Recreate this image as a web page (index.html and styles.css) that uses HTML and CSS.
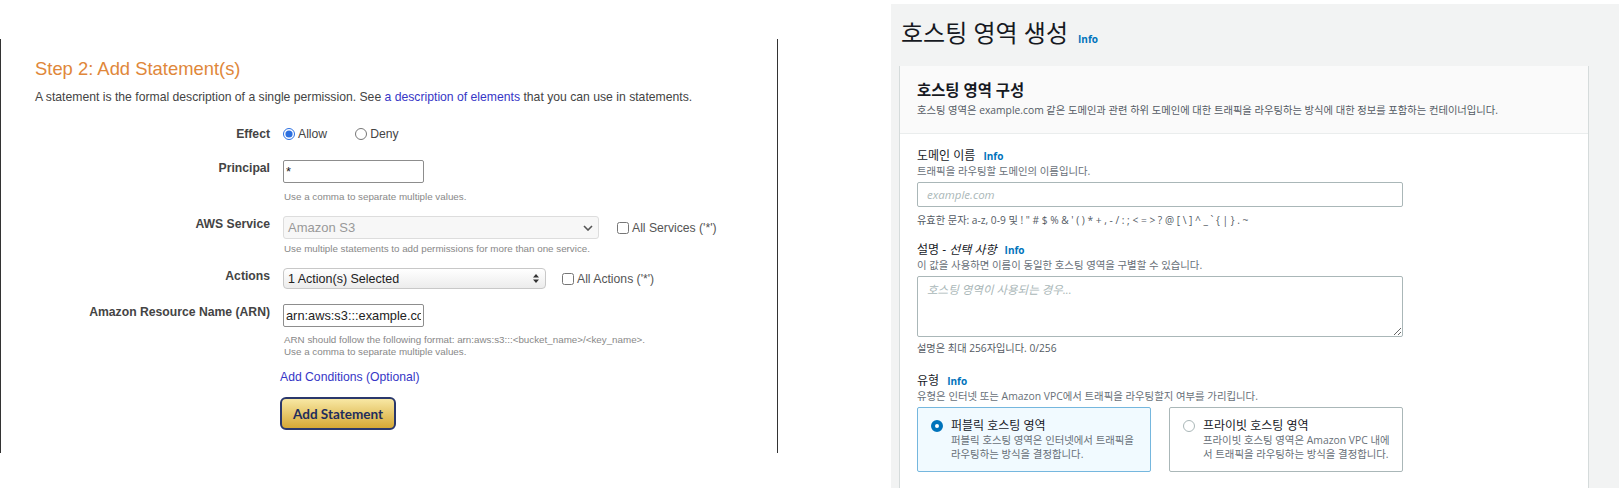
FILE: index.html
```html
<!DOCTYPE html>
<html lang="ko">
<head>
    <meta charset="UTF-8">
    <title>Add Statement / 호스팅 영역 생성</title>
    <link rel="stylesheet" href="styles.css">
</head>
<body>
<div class="page">
    <!-- Policy generator: step 2 -->
    <section class="policy">
        <h2 class="step-title">Step 2: Add Statement(s)</h2>
        <p class="step-desc">A statement is the formal description of a single permission. See <a href="#">a description of elements</a> that you can use in statements.</p>

        <div class="field field-effect">
            <div class="field-label">Effect</div>
            <div class="field-control">
                <div class="control-row">
                    <label class="choice"><input type="radio" name="effect" checked>Allow</label>
                    <label class="choice choice-deny"><input type="radio" name="effect">Deny</label>
                </div>
            </div>
        </div>

        <div class="field field-principal">
            <div class="field-label">Principal</div>
            <div class="field-control">
                <input class="text-input" type="text" value="*">
                <div class="hint hint-principal">Use a comma to separate multiple values.</div>
            </div>
        </div>

        <div class="field field-service">
            <div class="field-label">AWS Service</div>
            <div class="field-control">
                <div class="control-row">
                    <div class="select select-disabled">
                        <span>Amazon S3</span>
                        <svg width="10" height="6" viewBox="0 0 10 6"><path d="M1 1l4 4 4-4" fill="none" stroke="#555" stroke-width="1.6"/></svg>
                    </div>
                    <label class="check check-service"><input type="checkbox">All Services ('*')</label>
                </div>
                <div class="hint hint-service">Use multiple statements to add permissions for more than one service.</div>
            </div>
        </div>

        <div class="field field-actions">
            <div class="field-label">Actions</div>
            <div class="field-control">
                <div class="control-row">
                    <div class="select select-actions">
                        <span>1 Action(s) Selected</span>
                        <svg width="6" height="9" viewBox="0 0 6 9"><path d="M3 0l3 3.5H0z M3 9L0 5.5h6z" fill="#333"/></svg>
                    </div>
                    <label class="check check-actions"><input type="checkbox">All Actions ('*')</label>
                </div>
            </div>
        </div>

        <div class="field field-arn">
            <div class="field-label">Amazon Resource Name (ARN)</div>
            <div class="field-control">
                <input class="text-input" type="text" value="arn:aws:s3:::example.com/*">
                <div class="hint hint-arn">ARN should follow the following format: arn:aws:s3:::&lt;bucket_name&gt;/&lt;key_name&gt;.<br>Use a comma to separate multiple values.</div>
            </div>
        </div>

        <a class="conditions" href="#">Add Conditions (Optional)</a>
        <button class="add-btn" type="button">Add Statement</button>
    </section>

    <!-- Route 53: create hosted zone -->
    <section class="route53">
        <div class="page-title">
            <h1>호스팅 영역 생성</h1>
            <a class="info" href="#">Info</a>
        </div>

        <div class="card">
            <div class="card-header">
                <h2>호스팅 영역 구성</h2>
                <p>호스팅 영역은 example.com 같은 도메인과 관련 하위 도메인에 대한 트래픽을 라우팅하는 방식에 대한 정보를 포함하는 컨테이너입니다.</p>
            </div>
            <div class="card-body">
                <div class="form-field">
                    <div class="form-label">도메인 이름 <a class="info" href="#">Info</a></div>
                    <div class="form-desc">트래픽을 라우팅할 도메인의 이름입니다.</div>
                    <input class="r-input" type="text" placeholder="example.com">
                    <div class="form-note">유효한 문자: a-z, 0-9 및 ! " # $ % &amp; ' ( ) * + , - / : ; &lt; = &gt; ? @ [ \ ] ^ _ ` { | } . ~</div>
                </div>

                <div class="form-field field-desc">
                    <div class="form-label">설명 - <em>선택 사항</em> <a class="info" href="#">Info</a></div>
                    <div class="form-desc">이 값을 사용하면 이름이 동일한 호스팅 영역을 구별할 수 있습니다.</div>
                    <textarea class="r-textarea" placeholder="호스팅 영역이 사용되는 경우..."></textarea>
                    <div class="form-note">설명은 최대 256자입니다. 0/256</div>
                </div>

                <div class="form-field field-type">
                    <div class="form-label">유형 <a class="info" href="#">Info</a></div>
                    <div class="form-desc">유형은 인터넷 또는 Amazon VPC에서 트래픽을 라우팅할지 여부를 가리킵니다.</div>
                    <div class="tiles">
                        <div class="tile tile-selected">
                            <span class="radio-dot"></span>
                            <div>
                                <div class="tile-title">퍼블릭 호스팅 영역</div>
                                <div class="tile-desc">퍼블릭 호스팅 영역은 인터넷에서 트래픽을<br>라우팅하는 방식을 결정합니다.</div>
                            </div>
                        </div>
                        <div class="tile">
                            <span class="radio-dot"></span>
                            <div>
                                <div class="tile-title">프라이빗 호스팅 영역</div>
                                <div class="tile-desc">프라이빗 호스팅 영역은 Amazon VPC 내에<br>서 트래픽을 라우팅하는 방식을 결정합니다.</div>
                            </div>
                        </div>
                    </div>
                </div>
            </div>
        </div>
    </section>
</div>
</body>
</html>
```

FILE: styles.css
```css
* { box-sizing: border-box; }
body {
    margin: 0;
    background: #fff;
}
.page {
    display: flex;
    align-items: flex-start;
}

/* ---- policy generator ---- */
.policy {
    width: 778px;
    height: 414px;
    margin-top: 39px;
    padding: 19px 0 0 34px;
    border-left: 1px solid #333;
    border-right: 1px solid #333;
    font-family: "Liberation Sans", Arial, sans-serif;
    color: #444;
}
.policy a {
    color: #3636c6;
    text-decoration: none;
}
.step-title {
    margin: 0;
    font-size: 18.4px;
    line-height: 22px;
    font-weight: normal;
    color: #e0873a;
}
.step-desc {
    margin: 9px 0 0;
    font-size: 12.2px;
    line-height: 16px;
}
.field {
    display: flex;
    align-items: flex-start;
}
.field-label {
    width: 248px;
    padding-right: 13px;
    text-align: right;
    font-size: 12.2px;
    line-height: 16px;
    font-weight: bold;
    color: #444;
}
.field-control {
    display: flex;
    flex-direction: column;
}
.control-row {
    display: flex;
    align-items: center;
    height: 16px;
}
.field-effect { margin-top: 21px; }
.field-principal { margin-top: 18px; }
.field-service { margin-top: 13px; }
.field-actions { margin-top: 13px; }
.field-arn { margin-top: 15px; }
.field-service .control-row { height: 23px; }
.field-actions .control-row { height: 21px; }

.choice, .check {
    display: flex;
    align-items: center;
    font-size: 12.2px;
    color: #444;
}
.choice input {
    width: 12px;
    height: 12px;
    margin: 0 3px 0 0;
    accent-color: #2b6fe0;
}
.choice-deny { margin-left: 28px; }
.check input {
    width: 12px;
    height: 12px;
    margin: 0 3px 0 0;
}
.check-service { margin-left: 18px; color: #555; }
.check-actions { margin-left: 16px; color: #555; }

.text-input {
    width: 141px;
    height: 23px;
    padding: 0 2px;
    border: 1px solid #8d8d8d;
    border-radius: 2px;
    font-family: "Liberation Sans", Arial, sans-serif;
    font-size: 12.8px;
    color: #222;
}
.select {
    display: flex;
    align-items: center;
    justify-content: space-between;
    font-size: 12px;
}
.select-disabled {
    width: 316px;
    height: 23px;
    padding: 0 5px 0 4px;
    border: 1px solid #ddd;
    border-radius: 3px;
    background: #f7f7f7;
    color: #999;
    font-size: 13px;
}
.select-actions {
    width: 263px;
    height: 21px;
    padding: 0 6px 0 4px;
    border: 1px solid #c8c8c8;
    border-radius: 4px;
    background: linear-gradient(#fff, #ececec);
    color: #222;
    font-size: 12.5px;
}
.hint {
    font-size: 9.8px;
    line-height: 12px;
    color: #888;
    padding-left: 1px;
}
.hint-principal { margin-top: 8px; }
.hint-service { margin-top: 4px; }
.hint-arn { margin-top: 7px; }

.conditions {
    display: block;
    margin: 11px 0 0 245px;
    font-size: 12.2px;
    line-height: 16px;
}
.add-btn {
    display: block;
    width: 116px;
    height: 33px;
    margin: 12px 0 0 245px;
    border: 2px solid #2a386c;
    border-radius: 6px;
    background: linear-gradient(#f8e8a4, #d5a835);
    color: #1f2d5c;
    font-family: Lato, "Open Sans", sans-serif;
    font-size: 13.5px;
    font-weight: bold;
}

/* ---- route 53 ---- */
.route53 {
    width: 728px;
    height: 484px;
    margin: 4px 0 0 113px;
    padding: 14px 0 0 8px;
    overflow: hidden;
    background: #f2f3f3;
    font-family: "Open Sans", "Noto Sans CJK KR", sans-serif;
    color: #16191f;
}
.page-title {
    display: flex;
    align-items: baseline;
    gap: 10px;
    padding-left: 2px;
}
.page-title h1 {
    margin: 0;
    font-size: 24px;
    line-height: 30px;
    font-weight: normal;
}
.page-title .info { position: relative; top: 1px; }
.info {
    color: #0073bb;
    font-size: 10px;
    font-weight: bold;
    text-decoration: none;
}
.form-label .info { margin-left: 5px; }
.card {
    width: 690px;
    height: 500px;
    margin-top: 18px;
    background: #fff;
    border-left: 1px solid #d5dbdb;
    border-right: 1px solid #d5dbdb;
}
.card-header {
    padding: 15px 17px 16px;
    background: #fafafa;
    border-bottom: 1px solid #eaeded;
}
.card-header h2 {
    margin: 0;
    font-size: 15.4px;
    line-height: 20px;
    font-weight: bold;
}
.card-header p {
    margin: 2px 0 0;
    font-size: 10.3px;
    line-height: 14px;
    color: #545b64;
}
.card-body {
    padding: 14px 17px 0;
}
.form-label {
    font-size: 12px;
    line-height: 16px;
}
.form-label em { font-style: italic; }
.form-desc {
    font-size: 10.4px;
    line-height: 14px;
    color: #687078;
}
.form-note {
    margin-top: 6px;
    font-size: 10.2px;
    line-height: 14px;
    color: #545b64;
}
.field-desc { margin-top: 15px; }
.field-desc .form-note { margin-top: 4px; }
.field-type { margin-top: 18px; }

.r-input, .r-textarea {
    display: block;
    width: 486px;
    margin-top: 4px;
    padding: 0 9px;
    border: 1px solid #aab7b8;
    border-radius: 2px;
    font-family: "Open Sans", "Noto Sans CJK KR", sans-serif;
    font-size: 11.5px;
    color: #16191f;
}
.r-input { height: 25px; }
.r-textarea {
    height: 61px;
    padding-top: 4px;
    resize: vertical;
}
.r-input::placeholder, .r-textarea::placeholder {
    color: #aab7b8;
    font-style: italic;
}

.tiles {
    display: grid;
    grid-template-columns: 1fr 1fr;
    gap: 18px;
    width: 486px;
    margin-top: 4px;
}
.tile {
    display: flex;
    align-items: flex-start;
    gap: 8px;
    height: 65px;
    padding: 11px 2px 0 13px;
    border: 1px solid #aab7b8;
    border-radius: 2px;
}
.tile-selected {
    background: #f1faff;
    border-color: #75b7de;
}
.radio-dot {
    flex: none;
    width: 12px;
    height: 12px;
    margin-top: 1px;
    border: 1.5px solid #aab7b8;
    border-radius: 50%;
    background: #fff;
}
.tile-selected .radio-dot {
    border: 4px solid #0073bb;
}
.tile-title {
    font-size: 12px;
    line-height: 14px;
}
.tile-desc {
    font-size: 10.4px;
    line-height: 14px;
    color: #687078;
    white-space: nowrap;
}
```
